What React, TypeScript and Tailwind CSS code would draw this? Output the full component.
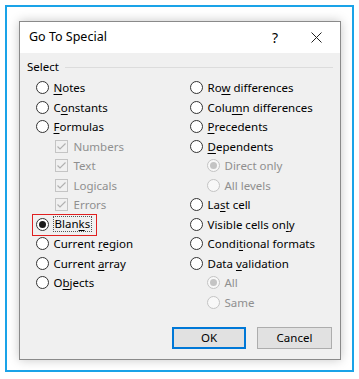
import React from "react";

type Opt = {
  label: string;
  key?: number;
  kind?: "radio" | "check" | "sub";
  checked?: boolean;
  disabled?: boolean;
};

const left: Opt[] = [
  { label: "Notes", key: 0 },
  { label: "Constants", key: 1 },
  { label: "Formulas", key: 0 },
  { label: "Numbers", kind: "check", checked: true, disabled: true },
  { label: "Text", kind: "check", checked: true, disabled: true },
  { label: "Logicals", kind: "check", checked: true, disabled: true },
  { label: "Errors", kind: "check", checked: true, disabled: true },
  { label: "Blanks", key: 4, checked: true },
  { label: "Current region", key: 8 },
  { label: "Current array", key: 8 },
  { label: "Objects", key: 1 },
];

const right: Opt[] = [
  { label: "Row differences", key: 2 },
  { label: "Column differences", key: 4 },
  { label: "Precedents", key: 0 },
  { label: "Dependents", key: 0 },
  { label: "Direct only", kind: "sub", checked: true, disabled: true },
  { label: "All levels", kind: "sub", disabled: true },
  { label: "Last cell", key: 2 },
  { label: "Visible cells only", key: 16 },
  { label: "Conditional formats", key: 5 },
  { label: "Data validation", key: 5 },
  { label: "All", kind: "sub", checked: true, disabled: true },
  { label: "Same", kind: "sub", disabled: true },
];

const Label: React.FC<{ text: string; k?: number }> = ({ text, k }) => {
  if (k === undefined) return <span>{text}</span>;
  return (
    <span>
      {text.slice(0, k)}
      <span className="underline underline-offset-2">{text[k]}</span>
      {text.slice(k + 1)}
    </span>
  );
};

const Radio: React.FC<{ checked?: boolean; disabled?: boolean }> = ({ checked, disabled }) => (
  <span
    className={`flex items-center justify-center w-[13px] h-[13px] rounded-full border shrink-0 ${
      disabled ? "border-[#c4c4c4] bg-[#f8f8f8]" : "border-[#333] bg-white"
    }`}
  >
    {checked && (
      <span className={`w-[7px] h-[7px] rounded-full ${disabled ? "bg-[#c4c4c4]" : "bg-[#1a1a1a]"}`} />
    )}
  </span>
);

const Check = () => (
  <span className="flex items-center justify-center w-[13px] h-[13px] border border-[#c4c4c4] bg-[#f0f0f0] shrink-0">
    <svg width="11" height="11" viewBox="0 0 11 11">
      <polyline points="1.5,5.5 4,8 9.5,2.5" fill="none" stroke="#b0b0b0" strokeWidth="1.2" />
    </svg>
  </span>
);

const Row: React.FC<{ o: Opt }> = ({ o }) => {
  const text = o.disabled ? "text-[#8f8f8f]" : "text-black";
  if (o.kind === "check") {
    return (
      <div className={`flex items-center h-[19.5px] pl-[19px] gap-[6px] ${text}`}>
        <Check />
        <Label text={o.label} />
      </div>
    );
  }
  if (o.kind === "sub") {
    return (
      <div className={`flex items-center h-[19.5px] pl-[17px] gap-[5px] ${text}`}>
        <Radio checked={o.checked} disabled />
        <Label text={o.label} />
      </div>
    );
  }
  if (o.label === "Blanks") {
    return (
      <div className="relative flex items-center h-[19.5px] gap-[4px] text-black">
        <div className="absolute left-[-4px] top-[-1px] w-[65px] h-[22px] border border-[#e02020]" />
        <Radio checked />
        <span className="border border-dotted border-[#555] px-[1px] leading-[14px]">
          <Label text={o.label} k={o.key} />
        </span>
      </div>
    );
  }
  return (
    <div className={`flex items-center h-[19.5px] gap-[5px] ${text}`}>
      <Radio checked={o.checked} />
      <Label text={o.label} k={o.key} />
    </div>
  );
};

export default function App() {
  return (
    <div className="w-[359px] h-[379px] bg-white" style={{ fontFamily: '"Noto Sans", "Open Sans", sans-serif' }}>
      <div className="ml-[5px] pt-[5px]">
        <div className="w-[349px] h-[367px] border-2 border-[#1aa3e8] bg-white pl-[12px] pt-[14px]">
          <div className="w-[322px] h-[339px] border border-[#8a8a8a] bg-[#f0f0f0] shadow-[0_0_10px_rgba(0,0,0,0.22)] flex flex-col">
            {/* Title bar */}
            <div className="h-[31px] bg-white flex items-center pl-[9px] pr-[18px] text-[12.5px] text-black">
              <span className="flex-1">Go To Special</span>
              <span className="mr-[33px] text-[14px]">?</span>
              <svg width="11" height="11" viewBox="0 0 11 11">
                <path d="M0.5 0.5 L10.5 10.5 M10.5 0.5 L0.5 10.5" stroke="#222" strokeWidth="1" />
              </svg>
            </div>

            {/* Body */}
            <div className="flex-1 flex flex-col pt-[6px] text-[11.5px]">
              <div className="flex items-center h-[16px] pl-[7px] pr-[7px] gap-[6px] text-black">
                <span>Select</span>
                <div className="flex-1 h-px bg-[#dcdcdc]" />
              </div>
              <div className="flex mt-[3px] pl-[15.5px]">
                <div className="w-[154px] flex flex-col">
                  {left.map((o) => (
                    <Row key={o.label} o={o} />
                  ))}
                </div>
                <div className="flex flex-col">
                  {right.map((o) => (
                    <Row key={o.label} o={o} />
                  ))}
                </div>
              </div>
              <div className="flex justify-end gap-[11px] pr-[8px] mt-[15px]">
                <button className="w-[74px] h-[22px] border-2 border-[#0078d7] bg-[#e1e1e1] text-black">OK</button>
                <button className="w-[75px] h-[22px] border border-[#adadad] bg-[#e1e1e1] text-black">Cancel</button>
              </div>
            </div>
          </div>
        </div>
      </div>
    </div>
  );
}
